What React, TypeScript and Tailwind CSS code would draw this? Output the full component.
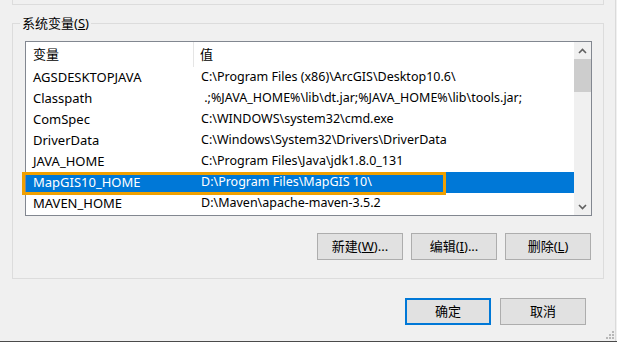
import React from 'react';

const rows = [
  { name: 'AGSDESKTOPJAVA', value: 'C:\\Program Files (x86)\\ArcGIS\\Desktop10.6\\' },
  { name: 'Classpath', value: ' .;%JAVA_HOME%\\lib\\dt.jar;%JAVA_HOME%\\lib\\tools.jar;' },
  { name: 'ComSpec', value: 'C:\\WINDOWS\\system32\\cmd.exe' },
  { name: 'DriverData', value: 'C:\\Windows\\System32\\Drivers\\DriverData' },
  { name: 'JAVA_HOME', value: 'C:\\Program Files\\Java\\jdk1.8.0_131' },
  { name: 'MapGIS10_HOME', value: 'D:\\Program Files\\MapGIS 10\\', selected: true },
  { name: 'MAVEN_HOME', value: 'D:\\Maven\\apache-maven-3.5.2' },
];

function Chevron({ up }: { up?: boolean }) {
  return (
    <svg width="9" height="6" viewBox="0 0 9 6" className="block">
      <path
        d={up ? 'M1 5 L4.5 1.5 L8 5' : 'M1 1 L4.5 4.5 L8 1'}
        fill="none"
        stroke="#606060"
        strokeWidth="1.6"
      />
    </svg>
  );
}

function Button({ children, primary }: { children: React.ReactNode; primary?: boolean }) {
  return (
    <button
      className={
        primary
          ? 'w-[86px] h-[27px] bg-[#e1e1e1] border-2 border-[#0078d7] text-[13px] text-black flex items-center justify-center'
          : 'w-[86px] h-[27px] bg-[#e1e1e1] border border-[#adadad] text-[13px] text-black flex items-center justify-center'
      }
    >
      {children}
    </button>
  );
}

export default function App() {
  return (
    <div
      className="w-[617px] h-[342px] bg-[#f0f0f0] overflow-hidden relative text-black"
      style={{ fontFamily: '"Noto Sans", "Noto Sans CJK SC", sans-serif' }}
    >
      <div className="w-[616px] h-[341px] border-r border-[#dadada] flex flex-col">
        {/* previous group box, bottom edge */}
        <div className="ml-[12px] w-[592px] h-[5px] border-x border-b border-[#dcdcdc]" />

        {/* system variables group */}
        <div className="relative ml-[12px] mt-[18px] w-[592px] h-[256px] border border-[#dcdcdc] flex flex-col">
          <span className="absolute left-[7px] top-[-9px] px-[2px] bg-[#f0f0f0] text-[13px] leading-[16px]">
            系统变量(<span className="underline">S</span>)
          </span>

          <div className="ml-[12px] mt-[17px] w-[567px] h-[175px] border border-[#828790] bg-white flex">
            <div className="flex-1 flex flex-col">
              <div className="h-[25px] flex items-center text-[13px]">
                <div className="w-[168px] h-full pl-[7px] flex items-center border-r border-[#e5e5e5]">变量</div>
                <div className="pl-[6px]">值</div>
              </div>
              {rows.map((r) => (
                <div
                  key={r.name}
                  className={
                    r.selected
                      ? 'h-[21px] flex items-center bg-[#0078d7] text-white whitespace-pre'
                      : 'h-[21px] flex items-center whitespace-pre'
                  }
                >
                  <div className="w-[168px] pl-[7px] text-[13px]">{r.name}</div>
                  <div className="pl-[7px] text-[12.5px]">{r.value}</div>
                </div>
              ))}
            </div>
            <div className="w-[17px] bg-[#f0f0f0] flex flex-col items-center">
              <div className="h-[17px] flex items-center justify-center">
                <Chevron up />
              </div>
              <div className="w-[17px] h-[33px] bg-[#cdcdcd]" />
              <div className="flex-1" />
              <div className="h-[17px] flex items-center justify-center">
                <Chevron />
              </div>
            </div>
          </div>

          <div className="mt-[17px] mr-[12px] flex justify-end gap-[8px]">
            <Button>
              新建(<span className="underline">W</span>)...
            </Button>
            <Button>
              编辑(<span className="underline">I</span>)...
            </Button>
            <Button>
              删除(<span className="underline">L</span>)
            </Button>
          </div>
        </div>

        <div className="mt-[19px] mr-[29px] flex justify-end gap-[9px]">
          <Button primary>确定</Button>
          <Button>取消</Button>
        </div>
      </div>

      {/* annotation highlight around the selected entry */}
      <div className="absolute left-[22px] top-[172px] w-[424px] h-[23px] border-[3px] border-[#f0a000]" />

      {/* size grip */}
      <svg className="absolute right-[3px] bottom-[3px]" width="9" height="9" viewBox="0 0 9 9">
        {[
          [7, 1],
          [4, 4],
          [7, 4],
          [1, 7],
          [4, 7],
          [7, 7],
        ].map(([x, y]) => (
          <rect key={`${x}-${y}`} x={x} y={y} width="2" height="2" fill="#b8b8b8" />
        ))}
      </svg>

      <div className="absolute left-0 bottom-0 w-full h-[1px] bg-[#4a4a4a]" />
    </div>
  );
}
